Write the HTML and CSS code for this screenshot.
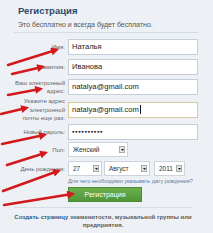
FILE: index.html
```html
<!DOCTYPE html>
<html>

<head>
    <meta charset="utf-8">
    <link rel="stylesheet" href="styles.css">
</head>

<body>
    <section id="main">
        <div class="head">
            <h1>Регистрация</h1>
            <p>Это бесплатно и всегда будет бесплатно.</p>
        </div>
        <div class="form">
            <div class="row">
                <label>Имя:</label>
                <span class="field">Наталья</span>
            </div>
            <div class="row">
                <label>Фамилия:</label>
                <span class="field">Иванова</span>
            </div>
            <div class="row">
                <label>Ваш электронный адрес:</label>
                <span class="field">natalya@gmail.com</span>
            </div>
            <div class="row">
                <label class="three">Укажите адрес электронной почты еще раз:</label>
                <span class="field focus">natalya@gmail.com<span class="caret"></span></span>
            </div>
            <div class="row">
                <label>Новый пароль:</label>
                <span class="field dots">●●●●●●●●●●</span>
            </div>
            <div class="row tight">
                <label>Пол:</label>
                <span class="sel w-sex">Женский<span class="btn"><svg width="3" height="2" viewBox="0 0 3 2"><path d="M0 0H3L1.5 2z" fill="#222"/></svg></span></span>
            </div>
            <div class="row">
                <label>День рождения:</label>
                <span class="sel w-day">27<span class="btn"><svg width="3" height="2" viewBox="0 0 3 2"><path d="M0 0H3L1.5 2z" fill="#222"/></svg></span></span>
                <span class="sel w-month">Август<span class="btn"><svg width="3" height="2" viewBox="0 0 3 2"><path d="M0 0H3L1.5 2z" fill="#222"/></svg></span></span>
                <span class="sel w-year">2011<span class="btn"><svg width="3" height="2" viewBox="0 0 3 2"><path d="M0 0H3L1.5 2z" fill="#222"/></svg></span></span>
            </div>
            <div class="row tight">
                <label></label>
                <a class="why" href="#">Для чего необходимо указывать дату рождения?</a>
            </div>
            <div class="row tight">
                <label></label>
                <button class="submit">Регистрация</button>
            </div>
        </div>
        <div class="foot">
            <a href="#">Создать страницу</a> знаменитости, музыкальной группы или предприятия.
        </div>

        <svg class="arrows" width="213" height="233" viewBox="0 0 213 233">
            <defs>
                <marker id="head" viewBox="0 0 10 10" refX="6" refY="5" markerWidth="9" markerHeight="8"
                    markerUnits="userSpaceOnUse" orient="auto">
                    <path d="M0 0L10 5L0 10z" fill="#d3191c" />
                </marker>
            </defs>
            <g stroke="#d3191c" stroke-width="2.5" stroke-linecap="round" marker-end="url(#head)">
                <line x1="8" y1="65" x2="56" y2="50" />
                <line x1="12" y1="74" x2="42" y2="67" />
                <line x1="8" y1="95" x2="40" y2="89" />
                <line x1="1" y1="114" x2="26" y2="108" />
                <line x1="2" y1="144" x2="44" y2="135" />
                <line x1="7" y1="165" x2="45" y2="153" />
                <line x1="3" y1="191" x2="58" y2="171" />
                <line x1="4" y1="205" x2="72" y2="194" />
            </g>
        </svg>
    </section>
</body>

</html>
```

FILE: styles.css
```css
body {
    margin: 0;
    background: #edf1f5;
    font-family: 'Liberation Sans', Arial, sans-serif;
    color: #555;
}

#main {
    position: relative;
    width: 213px;
    height: 233px;
    overflow: hidden;
}

.head {
    margin: 0 15px 0 14px;
    padding: 5px 0 3px 4px;
    border-bottom: 1px solid #d3dbe4;
}

.head h1 {
    margin: 0;
    font-size: 9.5px;
    line-height: 12px;
    color: #2b4a6e;
}

.head p {
    margin: 3px 0 0;
    font-size: 7px;
    line-height: 9px;
    color: #555;
}

.form {
    padding-top: 2px;
}

.row {
    display: flex;
    align-items: center;
    margin-top: 4px;
}

.row.tight {
    margin-top: 2px;
}

.row label {
    width: 53px;
    margin: 0 3px 0 12px;
    flex: none;
    text-align: right;
    font-size: 6px;
    line-height: 8px;
    color: #666;
}

.row label.three {
    margin-top: -2px;
    margin-bottom: -3px;
    line-height: 8.7px;
}

.field {
    box-sizing: border-box;
    width: 130px;
    height: 16px;
    padding: 0 3px;
    background: #fff;
    border: 1px solid #c4ced8;
    font-size: 7.6px;
    line-height: 14px;
    color: #222;
    white-space: nowrap;
}

.field.focus {
    border-color: #d8c89c;
}

.caret {
    display: inline-block;
    width: 0;
    height: 9px;
    margin-left: 1px;
    border-left: 1px solid #111;
    vertical-align: -2px;
}

.field.dots {
    font-size: 4.5px;
    letter-spacing: 0.4px;
}

.sel {
    box-sizing: border-box;
    display: flex;
    align-items: center;
    justify-content: space-between;
    height: 15px;
    margin-right: 2px;
    padding: 0 2px 0 4px;
    background: #fff;
    border: 1px solid #ccd5de;
    font-size: 6.5px;
    color: #333;
}

.sel .btn {
    box-sizing: border-box;
    display: flex;
    align-items: center;
    justify-content: center;
    width: 6px;
    height: 7px;
    background: #e6e6e6;
    border: 1px solid #a9a9a9;
}

.w-sex {
    width: 60px;
}

.w-day {
    width: 34px;
}

.w-month {
    width: 46px;
}

.w-year {
    width: 31px;
    margin-left: 2px;
}

.why {
    font-size: 5.5px;
    line-height: 7px;
    color: #62789a;
    text-decoration: none;
    white-space: nowrap;
}

.submit {
    width: 74px;
    height: 15px;
    padding: 0;
    border: 1px solid #4c8b34;
    background: linear-gradient(#6cb04c, #509638);
    color: #fff;
    font-family: inherit;
    font-size: 7px;
}

.foot {
    margin: 5px 21px 0 14px;
    padding-top: 5px;
    border-top: 1px solid #d3dbe4;
    text-align: center;
    font-size: 6px;
    line-height: 8px;
    font-weight: bold;
    color: #5a5a5a;
}

.foot a {
    color: #2f5a86;
    text-decoration: none;
}

.arrows {
    position: absolute;
    top: 0;
    left: 0;
    pointer-events: none;
}
```
